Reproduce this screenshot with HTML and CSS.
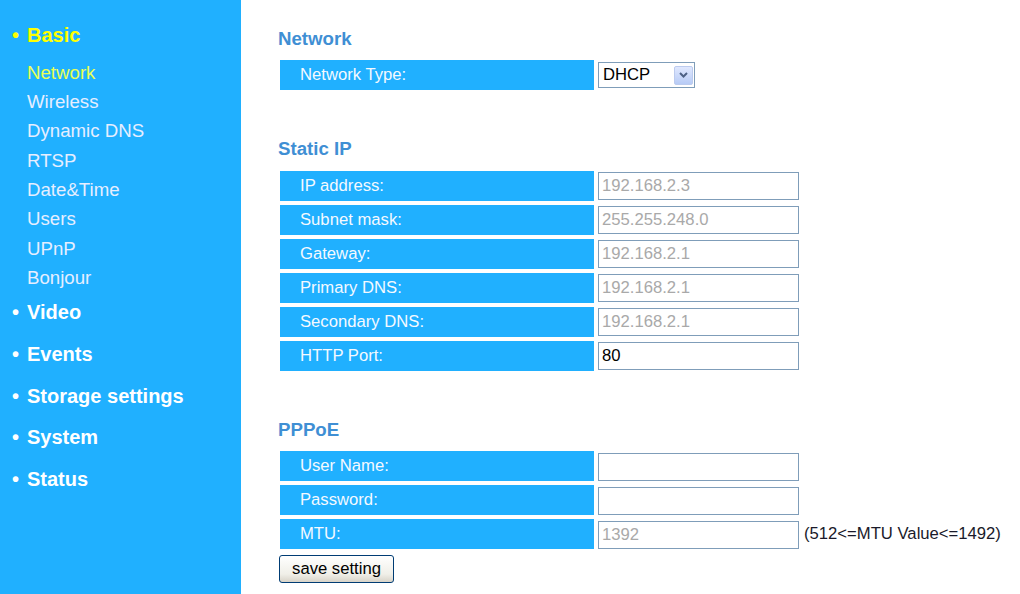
FILE: index.html
```html
<!DOCTYPE html>
<html>
<head>
<meta charset="utf-8">
<title>Network</title>
<link rel="stylesheet" href="styles.css">
</head>
<body>
<div class="page">
  <nav class="side">
    <div class="sec active"><span class="dot">•</span>Basic</div>
    <ul class="sub">
      <li class="cur">Network</li>
      <li>Wireless</li>
      <li>Dynamic DNS</li>
      <li>RTSP</li>
      <li>Date&amp;Time</li>
      <li>Users</li>
      <li>UPnP</li>
      <li>Bonjour</li>
    </ul>
    <div class="sec"><span class="dot">•</span>Video</div>
    <div class="sec"><span class="dot">•</span>Events</div>
    <div class="sec"><span class="dot">•</span>Storage settings</div>
    <div class="sec"><span class="dot">•</span>System</div>
    <div class="sec"><span class="dot">•</span>Status</div>
  </nav>
  <main class="main">
    <section class="group">
      <h2>Network</h2>
      <div class="rows">
        <div class="row">
          <div class="lbl">Network Type:</div>
          <div class="select"><span class="sel-text">DHCP</span><span class="arrow"><svg width="9" height="6" viewBox="0 0 9 6"><path d="M1 1 L4.5 4.5 L8 1" fill="none" stroke="#4d6185" stroke-width="2"/></svg></span></div>
        </div>
      </div>
    </section>
    <section class="group next">
      <h2>Static IP</h2>
      <div class="rows">
        <div class="row"><div class="lbl">IP address:</div><input class="field dim" value="192.168.2.3"></div>
        <div class="row"><div class="lbl">Subnet mask:</div><input class="field dim" value="255.255.248.0"></div>
        <div class="row"><div class="lbl">Gateway:</div><input class="field dim" value="192.168.2.1"></div>
        <div class="row"><div class="lbl">Primary DNS:</div><input class="field dim" value="192.168.2.1"></div>
        <div class="row"><div class="lbl">Secondary DNS:</div><input class="field dim" value="192.168.2.1"></div>
        <div class="row"><div class="lbl">HTTP Port:</div><input class="field" value="80"></div>
      </div>
    </section>
    <section class="group next">
      <h2>PPPoE</h2>
      <div class="rows">
        <div class="row"><div class="lbl">User Name:</div><input class="field" value=""></div>
        <div class="row"><div class="lbl">Password:</div><input class="field" type="password" value=""></div>
        <div class="row"><div class="lbl">MTU:</div><input class="field dim" value="1392"><span class="note">(512&lt;=MTU Value&lt;=1492)</span></div>
      </div>
    </section>
    <button class="save">save setting</button>
  </main>
</div>
</body>
</html>
```
FILE: styles.css
```css
html, body {
  margin: 0;
  padding: 0;
  background: #fff;
  font-family: "Liberation Sans", Arial, sans-serif;
}

.page {
  display: flex;
  min-height: 594px;
}

.side {
  width: 241px;
  flex-shrink: 0;
  background: #20b0ff;
  padding-top: 14.5px;
  box-sizing: border-box;
}

.sec {
  font-weight: bold;
  font-size: 20px;
  line-height: 41.67px;
  color: #ffffff;
  padding-left: 12px;
  white-space: nowrap;
}

.sec.active {
  color: #ffff00;
}

.dot {
  display: inline-block;
  width: 15px;
}

.sub {
  list-style: none;
  margin: 1.5px 0 0 0;
  padding: 0 0 0 27px;
}

.sub li {
  font-size: 18.67px;
  line-height: 29.33px;
  color: #e6eeff;
  white-space: nowrap;
}

.sub li.cur {
  color: #eaff55;
}

.main {
  flex: 1;
  padding: 27.5px 0 0 37px;
}

.group.next {
  margin-top: 48px;
}

h2 {
  margin: 0;
  font-size: 18.67px;
  line-height: 22px;
  font-weight: bold;
  color: #3f8fd4;
}

.rows {
  margin: 10.5px 0 0 2px;
  display: flex;
  flex-direction: column;
  gap: 4px;
}

.row {
  display: flex;
  align-items: center;
  gap: 4px;
  height: 30px;
}

.lbl {
  width: 314px;
  height: 30px;
  box-sizing: border-box;
  padding-left: 20px;
  background: #20b0ff;
  color: #f4f9ff;
  font-size: 16.67px;
  line-height: 30px;
  white-space: nowrap;
}

.field {
  width: 201px;
  height: 28px;
  box-sizing: border-box;
  margin: 1px 0 0 0;
  border: 1px solid #7f9db9;
  padding: 0 3px;
  background: #fff;
  font-family: "Liberation Sans", Arial, sans-serif;
  font-size: 16.67px;
  color: #000;
  outline: none;
}

.field.dim {
  color: #a9a9a9;
}

.note {
  margin-left: 1px;
  font-size: 16.67px;
  color: #1a1a2a;
  white-space: nowrap;
}

.select {
  width: 97px;
  height: 26px;
  box-sizing: border-box;
  border: 1px solid #7f9db9;
  background: #fff;
  display: flex;
  align-items: center;
  padding: 0 1px 0 4px;
}

.sel-text {
  flex: 1;
  font-size: 16.67px;
  color: #000;
}

.arrow {
  width: 19px;
  height: 19px;
  box-sizing: border-box;
  border: 1px solid #bccbee;
  border-radius: 2px;
  background: linear-gradient(#e0e8fe, #b7cbf6);
  display: flex;
  align-items: center;
  justify-content: center;
}

.save {
  display: block;
  margin: 5.5px 0 0 1px;
  width: 115px;
  height: 28px;
  padding: 0;
  border: 1px solid #003c74;
  border-radius: 3px;
  background: linear-gradient(#ffffff, #f0efe8 70%, #d8d3c8);
  font-family: "Liberation Sans", Arial, sans-serif;
  font-size: 16.67px;
  color: #000;
}
```
